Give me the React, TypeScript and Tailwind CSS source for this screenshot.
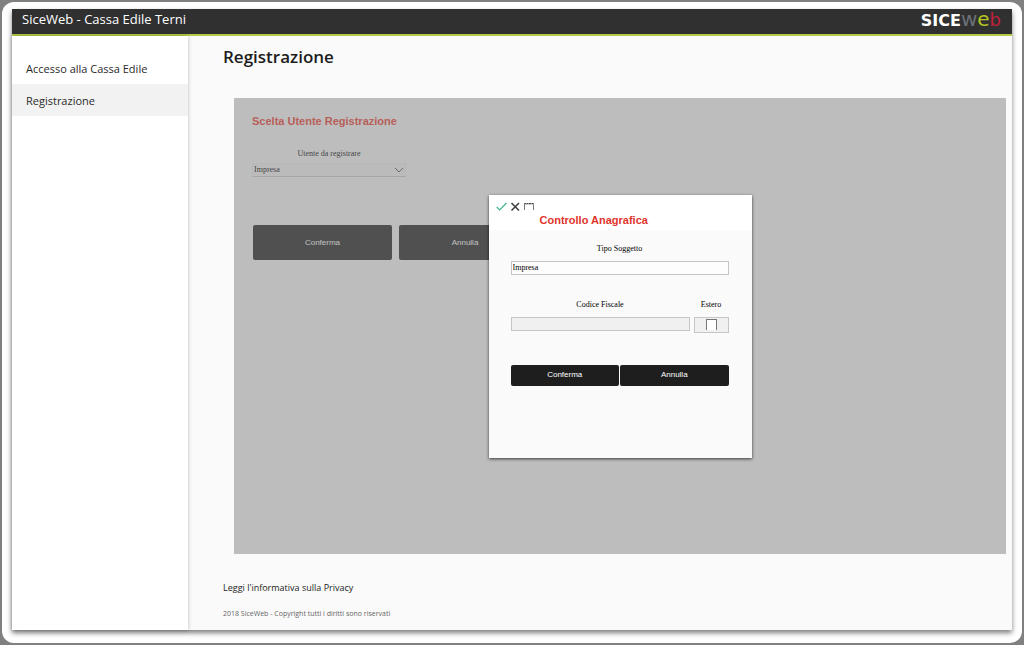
import { useState } from 'react'
import { clsx } from 'clsx'

const menuItems = ['Accesso alla Cassa Edile', 'Registrazione']

function Logo() {
  return (
    <a
      href="#home"
      aria-label="SiceWeb"
      className="flex items-baseline pb-1 font-['DejaVu_Sans',sans-serif] leading-4 text-white"
    >
      <span className="text-[16px] leading-4 font-bold">SICE</span>
      <span className="text-[20px] leading-4 text-[#6c7078]">w</span>
      <span className="text-[20px] leading-4 text-[#b5c422]">e</span>
      <span className="text-[18px] leading-4 text-[#c0203c]">b</span>
    </a>
  )
}

function Header() {
  return (
    <header className="flex h-[27px] items-center justify-between border-b-2 border-[#b8c848] bg-[#303030] pr-[11px] pl-[10px]">
      <span className="pb-1.5 text-[13px] leading-4 text-white">
        SiceWeb - Cassa Edile Terni
      </span>
      <Logo />
    </header>
  )
}

function Sidebar() {
  const [active, setActive] = useState('Registrazione')

  return (
    <nav className="w-44 shrink-0 bg-white pt-4 shadow-[0_0_4px_rgba(0,0,0,0.25)]">
      {menuItems.map((item) => (
        <a
          key={item}
          href="#"
          onClick={() => setActive(item)}
          className={clsx(
            'flex h-8 items-center px-[14px] pt-0.5 text-[11px] text-[#2a2a2a]',
            item === active && 'bg-[#f2f2f2]',
          )}
        >
          {item}
        </a>
      ))}
    </nav>
  )
}

function UserForm() {
  return (
    <form className="px-[18px] pt-4">
      <h2 className="font-['Liberation_Sans',sans-serif] text-[11px] leading-[14px] font-bold text-[#f03c31]">
        Scelta Utente Registrazione
      </h2>
      <div className="mt-[21px] flex w-[154px] flex-col font-['Liberation_Serif',serif] text-[8px] text-black">
        <label htmlFor="utente" className="text-center leading-[10px]">
          Utente da registrare
        </label>
        <div className="relative mt-1">
          <select
            id="utente"
            className="h-[14px] w-full appearance-none border border-[#eeeeee] border-b-[#cccccc] bg-[#f6f6f6] px-px"
          >
            <option>Impresa</option>
            <option>Consulente</option>
          </select>
          <svg
            viewBox="0 0 10 6"
            className="pointer-events-none absolute top-1 right-0.5 h-1.5 w-2.5"
            fill="none"
            stroke="#555"
          >
            <path d="M1 1l4 4 4-4" />
          </svg>
        </div>
      </div>
      <div className="mt-12 ml-px flex gap-[7px] font-['Liberation_Sans',sans-serif] text-[8px] text-white">
        <button type="button" className="h-[35px] w-[139px] rounded-xs bg-[#202020]">
          Conferma
        </button>
        <button type="button" className="h-[35px] w-[132px] rounded-xs bg-[#202020]">
          Annulla
        </button>
      </div>
    </form>
  )
}

function CheckDialog() {
  return (
    <div
      role="dialog"
      aria-labelledby="dialog-title"
      className="min-h-[263px] w-[263px] bg-[#fafafa] font-['Liberation_Serif',serif] text-[8px] leading-[10px] text-black shadow-[0_1px_3px_rgba(0,0,0,0.7)]"
    >
      <div className="h-[35px] bg-white pt-[7px]">
        <div className="flex h-2.5 gap-[3px] pl-[7px]">
          <button type="button" aria-label="Conferma">
            <svg viewBox="0 0 11 10" className="h-2.5 w-[11px]" fill="none" stroke="#3fb88a" strokeWidth="1.2">
              <path d="M.7 5l3 3L10.5 1" />
            </svg>
          </button>
          <button type="button" aria-label="Chiudi">
            <svg viewBox="0 0 11 10" className="h-2.5 w-[11px]" fill="none" stroke="#3c3c3c" strokeWidth="1.5">
              <path d="M1.5 1L9 8.5M9 1L1.5 8.5" />
            </svg>
          </button>
          <button type="button" aria-label="Ingrandisci">
            <svg viewBox="0 0 11 10" className="h-2.5 w-[11px]" fill="none" stroke="#777">
              <path d="M0 1.5h10" stroke="#444" strokeDasharray="2 .5" />
              <path d="M.5 1v7M9.5 1v7" />
              <path d="M1 2.5h8.5" stroke="#ccc" />
            </svg>
          </button>
        </div>
        <h2
          id="dialog-title"
          className="mt-px ml-[51px] font-['Liberation_Sans',sans-serif] text-[11px] leading-[14px] font-bold text-[#e0352b]"
        >
          Controllo Anagrafica
        </h2>
      </div>
      <form className="pt-3.5 pr-[23px] pl-[22px]">
        <div className="flex flex-col">
          <label htmlFor="tipo" className="text-center">
            Tipo Soggetto
          </label>
          <input
            id="tipo"
            type="text"
            defaultValue="Impresa"
            className="mt-[7px] h-[14px] border border-[#c6c6c6] bg-[#fdfdfd] px-px"
          />
        </div>
        <div className="mt-[25px] flex gap-1">
          <div className="flex flex-1 flex-col">
            <label htmlFor="codice" className="text-center">
              Codice Fiscale
            </label>
            <input
              id="codice"
              type="text"
              className="mt-[7px] h-[14px] w-full border border-[#c6c6c6] bg-[#f0f0f0] px-px"
            />
          </div>
          <div className="flex w-[35px] flex-col">
            <label htmlFor="estero" className="text-center">
              Estero
            </label>
            <div className="mt-[7px] flex h-4 items-center justify-center border border-[#c6c6c6] bg-[#f0f0f0]">
              <input
                id="estero"
                type="checkbox"
                className="h-[11px] w-[11px] appearance-none border border-b-0 border-[#777] bg-white checked:bg-[#777]"
              />
            </div>
          </div>
        </div>
        <div className="mt-8 flex gap-px font-['Liberation_Sans',sans-serif] text-[8px] text-white">
          <button type="button" className="h-[21px] flex-1 rounded-xs bg-[#1e1e1e]">
            Conferma
          </button>
          <button type="button" className="h-[21px] flex-1 rounded-xs bg-[#1e1e1e]">
            Annulla
          </button>
        </div>
      </form>
    </div>
  )
}

export default function App() {
  return (
    <div className="flex min-h-screen bg-[#808080] p-0.5 font-['Open_Sans',sans-serif]">
      <div className="flex flex-1 rounded-xl bg-white px-2.5 pt-[7px] pb-[13px]">
        <div className="flex flex-1 flex-col bg-[#fafafa] shadow-[0_3px_5px_rgba(0,0,0,0.5)]">
          <Header />
          <div className="flex flex-1">
            <Sidebar />
            <main className="flex flex-1 flex-col pt-[9px] pr-1.5 pl-[35px]">
              <h1 className="text-[17px] leading-6 font-semibold text-[#1c1c1c]">
                Registrazione
              </h1>
              <section className="relative mt-[29px] ml-[11px] flex-1 bg-[#fafafa]">
                <UserForm />
                <div className="absolute inset-0 flex items-center justify-center bg-[#808080]/50">
                  <CheckDialog />
                </div>
              </section>
              <footer className="mt-[26px] pb-[9px]">
                <a href="#privacy" className="block text-[9px] leading-4 text-[#1c1c1c]">
                  Leggi l'informativa sulla Privacy
                </a>
                <p className="mt-[11px] text-[7px] leading-[14px] text-[#666]">
                  2018 SiceWeb - Copyright tutti i diritti sono riservati
                </p>
              </footer>
            </main>
          </div>
        </div>
      </div>
    </div>
  )
}
